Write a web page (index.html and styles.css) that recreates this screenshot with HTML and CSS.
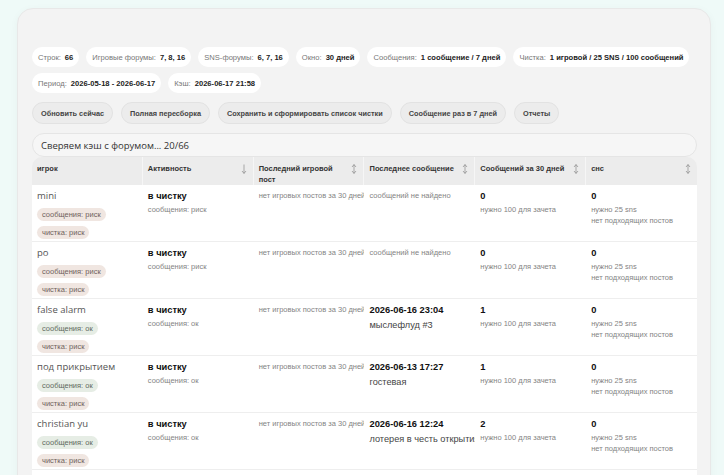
FILE: index.html
```html
<!DOCTYPE html>
<html lang="ru">
<head>
<meta charset="utf-8">
<title>Чистка</title>
<link rel="stylesheet" href="styles.css">
</head>
<body>
<div class="card">
  <div class="chips">
    <div class="chip-row">
      <span class="chip">Строк: <b>66</b></span>
      <span class="chip">Игровые форумы: <b>7, 8, 16</b></span>
      <span class="chip">SNS-форумы: <b>6, 7, 16</b></span>
      <span class="chip">Окно: <b>30 дней</b></span>
      <span class="chip">Сообщения: <b>1 сообщение / 7 дней</b></span>
      <span class="chip">Чистка: <b>1 игровой / 25 SNS / 100 сообщений</b></span>
    </div>
    <div class="chip-row">
      <span class="chip">Период: <b>2026-05-18 - 2026-06-17</b></span>
      <span class="chip">Кэш: <b>2026-06-17 21:58</b></span>
    </div>
  </div>
  <div class="actions">
    <button class="btn">Обновить сейчас</button>
    <button class="btn">Полная пересборка</button>
    <button class="btn">Сохранить и сформировать список чистки</button>
    <button class="btn">Сообщение раз в 7 дней</button>
    <button class="btn">Отчеты</button>
  </div>
  <div class="status">Сверяем кэш с форумом... 20/66</div>
  <table class="grid">
    <thead>
      <tr>
        <th><div class="th-in"><span>игрок</span></div></th>
        <th><div class="th-in"><span>Активность</span><svg class="sort" viewBox="0 0 6 10"><path d="M3 .5v9M1 7l2 2.4L5 7"/></svg></div></th>
        <th><div class="th-in"><span>Последний игровой пост</span><svg class="sort" viewBox="0 0 6 10"><path d="M3 .5v9M1 3L3 .6 5 3M1 7l2 2.4L5 7"/></svg></div></th>
        <th><div class="th-in"><span>Последнее сообщение</span><svg class="sort" viewBox="0 0 6 10"><path d="M3 .5v9M1 3L3 .6 5 3M1 7l2 2.4L5 7"/></svg></div></th>
        <th><div class="th-in"><span>Сообщений за 30 дней</span><svg class="sort" viewBox="0 0 6 10"><path d="M3 .5v9M1 3L3 .6 5 3M1 7l2 2.4L5 7"/></svg></div></th>
        <th><div class="th-in"><span>снс</span><svg class="sort" viewBox="0 0 6 10"><path d="M3 .5v9M1 3L3 .6 5 3M1 7l2 2.4L5 7"/></svg></div></th>
      </tr>
    </thead>
    <tbody>
      <tr>
        <td><div class="name">mini</div><span class="badge risk">сообщения: риск</span><span class="badge risk">чистка: риск</span></td>
        <td><div class="strong">в чистку</div><div class="sub">сообщения: риск</div></td>
        <td><div class="muted">нет игровых постов за 30 дней</div></td>
        <td><div class="muted">сообщений не найдено</div></td>
        <td><div class="strong">0</div><div class="sub">нужно 100 для зачета</div></td>
        <td><div class="strong">0</div><div class="sub">нужно 25 sns</div><div class="sub">нет подходящих постов</div></td>
      </tr>
      <tr>
        <td><div class="name">po</div><span class="badge risk">сообщения: риск</span><span class="badge risk">чистка: риск</span></td>
        <td><div class="strong">в чистку</div><div class="sub">сообщения: риск</div></td>
        <td><div class="muted">нет игровых постов за 30 дней</div></td>
        <td><div class="muted">сообщений не найдено</div></td>
        <td><div class="strong">0</div><div class="sub">нужно 100 для зачета</div></td>
        <td><div class="strong">0</div><div class="sub">нужно 25 sns</div><div class="sub">нет подходящих постов</div></td>
      </tr>
      <tr>
        <td><div class="name">false alarm</div><span class="badge ok">сообщения: ок</span><span class="badge risk">чистка: риск</span></td>
        <td><div class="strong">в чистку</div><div class="sub">сообщения: ок</div></td>
        <td><div class="muted">нет игровых постов за 30 дней</div></td>
        <td><div class="strong">2026-06-16 23:04</div><div class="topic">мыслефлуд #3</div></td>
        <td><div class="strong">1</div><div class="sub">нужно 100 для зачета</div></td>
        <td><div class="strong">0</div><div class="sub">нужно 25 sns</div><div class="sub">нет подходящих постов</div></td>
      </tr>
      <tr>
        <td><div class="name">под прикрытием</div><span class="badge ok">сообщения: ок</span><span class="badge risk">чистка: риск</span></td>
        <td><div class="strong">в чистку</div><div class="sub">сообщения: ок</div></td>
        <td><div class="muted">нет игровых постов за 30 дней</div></td>
        <td><div class="strong">2026-06-13 17:27</div><div class="topic">гостевая</div></td>
        <td><div class="strong">1</div><div class="sub">нужно 100 для зачета</div></td>
        <td><div class="strong">0</div><div class="sub">нужно 25 sns</div><div class="sub">нет подходящих постов</div></td>
      </tr>
      <tr>
        <td><div class="name">christian yu</div><span class="badge ok">сообщения: ок</span><span class="badge risk">чистка: риск</span></td>
        <td><div class="strong">в чистку</div><div class="sub">сообщения: ок</div></td>
        <td><div class="muted">нет игровых постов за 30 дней</div></td>
        <td><div class="strong">2026-06-16 12:24</div><div class="topic">лотерея в честь открытия</div></td>
        <td><div class="strong">2</div><div class="sub">нужно 100 для зачета</div></td>
        <td><div class="strong">0</div><div class="sub">нужно 25 sns</div><div class="sub">нет подходящих постов</div></td>
      </tr>
      <tr>
        <td><div class="name">ночной гость</div><span class="badge ok">сообщения: ок</span><span class="badge risk">чистка: риск</span></td>
        <td><div class="strong">в чистку</div><div class="sub">сообщения: ок</div></td>
        <td><div class="muted">нет игровых постов за 30 дней</div></td>
        <td><div class="strong">2026-06-15 10:12</div><div class="topic">флуд</div></td>
        <td><div class="strong">3</div><div class="sub">нужно 100 для зачета</div></td>
        <td><div class="strong">0</div><div class="sub">нужно 25 sns</div><div class="sub">нет подходящих постов</div></td>
      </tr>
    </tbody>
  </table>
</div>
</body>
</html>
```
FILE: styles.css
```css
html { overflow: hidden; }
body {
  margin: 0;
  background: #effaf8;
  font-family: "Liberation Sans", Arial, sans-serif;
  color: #333;
}
.card {
  margin: 8px 13px 0 17px;
  background: #f3f3f3;
  border: 1px solid #e8e8e8;
  border-radius: 16px;
  box-shadow: 0 2px 8px rgba(0, 0, 0, 0.04);
  padding: 38px 13px 20px 14px;
}
.chips {
  display: flex;
  flex-direction: column;
  gap: 6px;
}
.chip-row {
  display: flex;
  gap: 7px;
}
.chip {
  display: inline-flex;
  align-items: center;
  gap: 4px;
  height: 20px;
  padding: 0 6px;
  background: #fff;
  border-radius: 10px;
  font-size: 7.6px;
  color: #777;
  white-space: nowrap;
}
.chip b { color: #222; }
.actions {
  display: flex;
  gap: 8px;
  margin-top: 9px;
}
.btn {
  height: 22px;
  padding: 0 8px;
  border: 1px solid #e2e2e2;
  background: #ececec;
  border-radius: 11px;
  font-family: "Liberation Sans", Arial, sans-serif;
  font-weight: bold;
  font-size: 7.3px;
  color: #444;
  white-space: nowrap;
}
.status {
  display: flex;
  align-items: center;
  height: 24px;
  box-sizing: border-box;
  margin-top: 9px;
  padding: 0 8px;
  border: 1px solid #e5e5e5;
  border-radius: 12px;
  background: #f6f6f6;
  font-family: "Open Sans", sans-serif;
  font-size: 9.5px;
  color: #333;
}
.grid {
  width: 100%;
  table-layout: fixed;
  border-collapse: separate;
  border-spacing: 0;
}
.grid th {
  background: #ececec;
  text-align: left;
  vertical-align: top;
  padding: 6px 5px 0;
  font-size: 7.5px;
  line-height: 11px;
  font-weight: bold;
  color: #333;
  border-right: 1px solid #f6f6f6;
  height: 22px;
}
.grid th:first-child { border-top-left-radius: 10px; }
.grid th:last-child { border-top-right-radius: 10px; border-right: 0; }
.th-in {
  display: flex;
  justify-content: space-between;
  align-items: flex-start;
  gap: 4px;
}
.sort {
  flex: none;
  width: 6px;
  height: 10px;
  margin-top: 1px;
  margin-right: 1px;
  fill: none;
  stroke: #8a8a8a;
  stroke-width: 0.7;
}
.grid td {
  background: #fff;
  vertical-align: top;
  padding: 4px 5px 2px;
  border-bottom: 1px solid #eeeeee;
  overflow: hidden;
  white-space: nowrap;
}
.name {
  font-family: "Open Sans", sans-serif;
  font-size: 9.5px;
  line-height: 13px;
  color: #555;
}
.badge {
  display: block;
  width: fit-content;
  height: 13px;
  line-height: 13px;
  margin-top: 6px;
  padding: 0 5px;
  border-radius: 7px;
  font-size: 7.5px;
}
.badge + .badge { margin-top: 5px; }
.badge.risk { background: #f0e6e1; color: #6f625c; }
.badge.ok { background: #e6ede5; color: #5f6b5e; }
.strong {
  font-weight: bold;
  font-size: 9.3px;
  line-height: 15px;
  color: #111;
}
.sub {
  font-size: 7.5px;
  line-height: 11px;
  color: #848484;
}
.muted {
  font-size: 7.5px;
  line-height: 13px;
  color: #848484;
}
.topic {
  font-size: 9.2px;
  line-height: 14px;
  color: #444;
}
```
